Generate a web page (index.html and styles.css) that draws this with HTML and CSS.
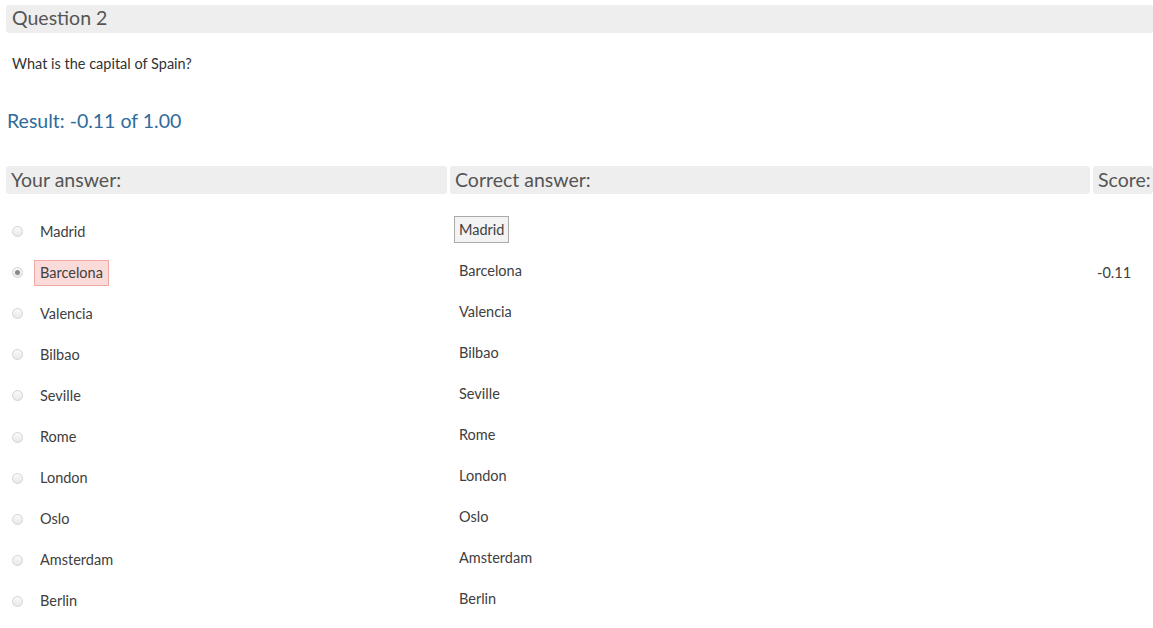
FILE: index.html
```html
<!DOCTYPE html>
<html>
<head>
<meta charset="utf-8">
<link rel="stylesheet" href="styles.css">
</head>
<body>
<div class="page">
  <div class="qhead">Question 2</div>
  <p class="qtext">What is the capital of Spain?</p>
  <div class="result">Result: -0.11 of 1.00</div>
  <div class="grid">
    <div class="th">Your answer:</div>
    <div class="th">Correct answer:</div>
    <div class="th">Score:</div>

    <div class="c1"><span class="radio"></span><span class="lbl">Madrid</span></div>
    <div class="c2"><span class="lbl correct">Madrid</span></div>
    <div class="c3"></div>

    <div class="c1"><span class="radio on"></span><span class="lbl wrong">Barcelona</span></div>
    <div class="c2"><span class="lbl">Barcelona</span></div>
    <div class="c3">-0.11</div>

    <div class="c1"><span class="radio"></span><span class="lbl">Valencia</span></div>
    <div class="c2"><span class="lbl">Valencia</span></div>
    <div class="c3"></div>

    <div class="c1"><span class="radio"></span><span class="lbl">Bilbao</span></div>
    <div class="c2"><span class="lbl">Bilbao</span></div>
    <div class="c3"></div>

    <div class="c1"><span class="radio"></span><span class="lbl">Seville</span></div>
    <div class="c2"><span class="lbl">Seville</span></div>
    <div class="c3"></div>

    <div class="c1"><span class="radio"></span><span class="lbl">Rome</span></div>
    <div class="c2"><span class="lbl">Rome</span></div>
    <div class="c3"></div>

    <div class="c1"><span class="radio"></span><span class="lbl">London</span></div>
    <div class="c2"><span class="lbl">London</span></div>
    <div class="c3"></div>

    <div class="c1"><span class="radio"></span><span class="lbl">Oslo</span></div>
    <div class="c2"><span class="lbl">Oslo</span></div>
    <div class="c3"></div>

    <div class="c1"><span class="radio"></span><span class="lbl">Amsterdam</span></div>
    <div class="c2"><span class="lbl">Amsterdam</span></div>
    <div class="c3"></div>

    <div class="c1"><span class="radio"></span><span class="lbl">Berlin</span></div>
    <div class="c2"><span class="lbl">Berlin</span></div>
    <div class="c3"></div>
  </div>
</div>
</body>
</html>
```
FILE: styles.css
```css
html, body {
  margin: 0;
  padding: 0;
  background: #fff;
}
body {
  font-family: Lato, "Open Sans", sans-serif;
  color: #404040;
}
.page {
  padding: 5px 0 0 6px;
}
.qhead {
  height: 28px;
  line-height: 26px;
  background: #eeeeee;
  border-radius: 3px;
  padding-left: 6px;
  font-size: 19.5px;
  color: #555;
}
.qtext {
  margin: 22px 0 0 6px;
  font-size: 14.5px;
  line-height: 18px;
  color: #333;
}
.result {
  margin: 36px 0 0 1px;
  font-size: 19.5px;
  line-height: 24px;
  color: #2f6b9a;
}
.grid {
  margin-top: 33px;
  display: grid;
  grid-template-columns: 441px 640px 1fr;
  grid-template-rows: 45px;
  grid-auto-rows: 41.1px;
  column-gap: 3px;
}
.grid .th {
  align-self: start;
  height: 28px;
  line-height: 27px;
  background: #eeeeee;
  border-radius: 3px;
  padding-left: 5px;
  font-size: 19.5px;
  color: #555;
}
.c1, .c2, .c3 {
  display: flex;
  align-items: center;
  font-size: 14.5px;
}
.c1 {
  padding-left: 6px;
}
.c2 {
  padding-left: 3px;
  padding-bottom: 4px;
}
.c3 {
  padding-left: 4px;
}
.radio {
  width: 11px;
  height: 11px;
  box-sizing: border-box;
  border-radius: 50%;
  border: 1px solid #d3d3d3;
  background: linear-gradient(#fafafa, #e9e9e9);
  margin: 0 11px 0 0;
  display: inline-flex;
  align-items: center;
  justify-content: center;
  flex: none;
}
.radio.on::after {
  content: "";
  width: 5px;
  height: 5px;
  border-radius: 50%;
  background: #8a8a8a;
}
.lbl {
  display: inline-block;
  padding: 0 5px;
  height: 26px;
  line-height: 24px;
  box-sizing: border-box;
  border: 1px solid transparent;
}
.lbl.wrong {
  background: #fbdbd9;
  border-color: #f0a8a4;
}
.lbl.correct {
  background: #f3f3f3;
  border-color: #aaaaaa;
  height: 27px;
  line-height: 25px;
  padding: 0 4px;
  margin-left: 1px;
}
```
